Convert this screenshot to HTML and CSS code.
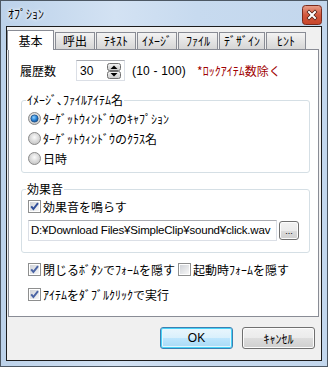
FILE: index.html
```html
<!DOCTYPE html>
<html lang="ja">
<head>
  <meta charset="UTF-8">
  <title>ｵﾌﾟｼｮﾝ</title>
  <link rel="stylesheet" href="styles.css">
</head>
<body>
<div class="window">
  <div class="titlebar">
    <span class="title">ｵﾌﾟｼｮﾝ</span>
    <span class="close">
      <svg width="20" height="20" viewBox="0 0 20 20">
        <defs>
          <linearGradient id="cg" x1="0" y1="0" x2="0" y2="1">
            <stop offset="0" stop-color="#e8a08c"/>
            <stop offset="0.5" stop-color="#d2583d"/>
            <stop offset="1" stop-color="#c8452a"/>
          </linearGradient>
        </defs>
        <rect x="0.5" y="0.5" width="19" height="19" rx="3" fill="url(#cg)" stroke="#7a2a1c"/>
        <path d="M7 7 L13 13 M13 7 L7 13" stroke="#4a1a10" stroke-width="3.4" stroke-linecap="square"/>
        <path d="M7 7 L13 13 M13 7 L7 13" stroke="#fff" stroke-width="2" stroke-linecap="square"/>
      </svg>
    </span>
  </div>

  <div class="client">
    <div class="tabctl">
      <div class="tabstrip">
        <span class="tab active">基本</span>
        <span class="tab">呼出</span>
        <span class="tab">ﾃｷｽﾄ</span>
        <span class="tab">ｲﾒｰｼﾞ</span>
        <span class="tab">ﾌｧｲﾙ</span>
        <span class="tab">ﾃﾞｻﾞｲﾝ</span>
        <span class="tab">ﾋﾝﾄ</span>
      </div>

      <div class="panel">
        <div class="row history">
          <span class="label">履歴数</span>
          <span class="spin">
            <span class="spin-val">30</span>
            <svg class="spin-btn" width="14" height="16" viewBox="0 0 14 16">
              <defs>
                <linearGradient id="sg" x1="0" y1="0" x2="0" y2="1">
                  <stop offset="0" stop-color="#f4f4f4"/>
                  <stop offset="1" stop-color="#c9c9c9"/>
                </linearGradient>
              </defs>
              <rect x="0.5" y="0.5" width="13" height="7" rx="2" fill="url(#sg)" stroke="#707070"/>
              <rect x="0.5" y="8.5" width="13" height="7" rx="2" fill="url(#sg)" stroke="#707070"/>
              <path d="M3.5 6 L7 2.5 L10.5 6 Z" fill="#000"/>
              <path d="M3.5 10 L7 13.5 L10.5 10 Z" fill="#000"/>
            </svg>
          </span>
          <span class="range">(10 - 100)</span>
          <span class="note">*ﾛｯｸｱｲﾃﾑ数除く</span>
        </div>

        <fieldset class="group">
          <legend>ｲﾒｰｼﾞ､ﾌｧｲﾙｱｲﾃﾑ名</legend>
          <div class="opt">
            <svg class="radio" width="13" height="13" viewBox="0 0 13 13">
              <defs>
                <radialGradient id="rg" cx="50%" cy="40%" r="60%">
                  <stop offset="0" stop-color="#fafafa"/>
                  <stop offset="1" stop-color="#c4c4c4"/>
                </radialGradient>
                <radialGradient id="rb" cx="40%" cy="35%" r="65%">
                  <stop offset="0" stop-color="#8ed0ff"/>
                  <stop offset="0.6" stop-color="#2a83d6"/>
                  <stop offset="1" stop-color="#15549a"/>
                </radialGradient>
              </defs>
              <circle cx="6.5" cy="6.5" r="6" fill="url(#rg)" stroke="#8a8a8a"/>
              <circle cx="6.5" cy="6.5" r="3.6" fill="url(#rb)" stroke="#1c4f86" stroke-width="0.8"/>
            </svg>
            <span>ﾀｰｹﾞｯﾄｳｨﾝﾄﾞｳのｷｬﾌﾟｼｮﾝ</span>
          </div>
          <div class="opt">
            <svg class="radio" width="13" height="13" viewBox="0 0 13 13">
              <circle cx="6.5" cy="6.5" r="6" fill="url(#rg)" stroke="#8a8a8a"/>
            </svg>
            <span>ﾀｰｹﾞｯﾄｳｨﾝﾄﾞｳのｸﾗｽ名</span>
          </div>
          <div class="opt">
            <svg class="radio" width="13" height="13" viewBox="0 0 13 13">
              <circle cx="6.5" cy="6.5" r="6" fill="url(#rg)" stroke="#8a8a8a"/>
            </svg>
            <span>日時</span>
          </div>
        </fieldset>

        <fieldset class="group sound">
          <legend>効果音</legend>
          <div class="opt">
            <svg class="check" width="13" height="13" viewBox="0 0 13 13">
              <defs>
                <linearGradient id="kg" x1="0" y1="0" x2="1" y2="1">
                  <stop offset="0" stop-color="#d0d3d8"/>
                  <stop offset="1" stop-color="#f7f7f7"/>
                </linearGradient>
              </defs>
              <rect x="0.5" y="0.5" width="12" height="12" fill="#fff" stroke="#8e8f8f"/>
              <rect x="2" y="2" width="9" height="9" fill="url(#kg)"/>
              <path d="M3.2 6.4 L5.4 9 L10 3.2" fill="none" stroke="#2f4e9a" stroke-width="2"/>
            </svg>
            <span>効果音を鳴らす</span>
          </div>
          <div class="pathrow">
            <span class="path">D:¥Download Files¥SimpleClip¥sound¥click.wav</span>
            <span class="btn small">...</span>
          </div>
        </fieldset>

        <div class="row checks">
          <div class="opt">
            <svg class="check" width="13" height="13" viewBox="0 0 13 13">
              <rect x="0.5" y="0.5" width="12" height="12" fill="#fff" stroke="#8e8f8f"/>
              <rect x="2" y="2" width="9" height="9" fill="url(#kg)"/>
              <path d="M3.2 6.4 L5.4 9 L10 3.2" fill="none" stroke="#4a64a4" stroke-width="2"/>
            </svg>
            <span>閉じるﾎﾞﾀﾝでﾌｫｰﾑを隠す</span>
          </div>
          <div class="opt">
            <svg class="check" width="13" height="13" viewBox="0 0 13 13">
              <rect x="0.5" y="0.5" width="12" height="12" fill="#fff" stroke="#8e8f8f"/>
              <rect x="2" y="2" width="9" height="9" fill="url(#kg)"/>
            </svg>
            <span>起動時ﾌｫｰﾑを隠す</span>
          </div>
        </div>
        <div class="row checks">
          <div class="opt">
            <svg class="check" width="13" height="13" viewBox="0 0 13 13">
              <rect x="0.5" y="0.5" width="12" height="12" fill="#fff" stroke="#8e8f8f"/>
              <rect x="2" y="2" width="9" height="9" fill="url(#kg)"/>
              <path d="M3.2 6.4 L5.4 9 L10 3.2" fill="none" stroke="#4a64a4" stroke-width="2"/>
            </svg>
            <span>ｱｲﾃﾑをﾀﾞﾌﾞﾙｸﾘｯｸで実行</span>
          </div>
        </div>
      </div>
    </div>

    <div class="buttons">
      <span class="btn default">OK</span>
      <span class="btn">ｷｬﾝｾﾙ</span>
    </div>
  </div>
</div>
</body>
</html>
```

FILE: styles.css
```css
* {
  margin: 0;
  padding: 0;
  box-sizing: border-box;
}

body {
  font-family: "Noto Sans CJK JP", "Noto Sans", sans-serif;
  font-size: 12px;
  color: #000;
  background: #fff;
}

.window {
  width: 328px;
  height: 367px;
  border: 1px solid #4d5864;
  padding: 0 5px 5px 5px;
  background: linear-gradient(90deg, #bcd2ea 0%, #d3e2f3 35%, #c7daef 60%, #c3d7ed 100%);
  display: flex;
  flex-direction: column;
}

.titlebar {
  height: 25px;
  display: flex;
  align-items: flex-start;
  justify-content: space-between;
}

.title {
  margin: 5px 0 0 2px;
  line-height: 16px;
  text-shadow: 0 0 5px #fff, 0 0 3px #fff;
}

.close {
  margin-top: 4px;
  display: flex;
}

.client {
  flex: 1;
  border: 1px solid #1c1c1c;
  background: #f0f0f0;
  display: flex;
  flex-direction: column;
}

.tabctl {
  margin: 3px 2px 0 0;
}

.tabstrip {
  display: flex;
  align-items: flex-end;
  gap: 1px;
  height: 19px;
}

.tab {
  height: 17px;
  min-width: 40px;
  padding: 0 4px;
  border: 1px solid #898c95;
  border-bottom: 0;
  background: linear-gradient(#f3f3f3, #e4e4e4 50%, #d6d6d6);
  text-align: center;
  line-height: 16px;
}

.tab.active {
  width: 47px;
  height: 20px;
  margin-bottom: -1px;
  background: #fff;
  position: relative;
  z-index: 1;
  line-height: 18px;
  padding-top: 1px;
}

.panel {
  margin-left: 1px;
  height: 268px;
  border: 1px solid #898c95;
  background: #fff;
  padding: 10px 8px 0 11px;
}

.row {
  display: flex;
  align-items: center;
}

.history {
  height: 21px;
}

.label {
  width: 56px;
}

.spin {
  width: 49px;
  height: 21px;
  border: 1px solid #dbdfe6;
  border-top-color: #abadb3;
  display: flex;
  align-items: center;
  padding: 0 3px 0 3px;
  font-family: "Liberation Sans", sans-serif;
}

.spin-btn {
  margin-left: auto;
  display: block;
}

.range {
  margin-left: 7px;
  font-family: "Liberation Sans", sans-serif;
  letter-spacing: 0.2px;
}

.note {
  margin-left: 11px;
  color: #a00000;
}

.group {
  margin: 12px 0 0 1px;
  border: 1px solid #d5dfe5;
  border-radius: 3px;
  padding: 1px 0 4px 6px;
}

.group legend {
  line-height: 14px;
  padding: 0 1px;
  margin-left: -2px;
}

.opt {
  height: 20px;
  display: flex;
  align-items: center;
  gap: 2px;
  white-space: nowrap;
}

.radio,
.check {
  display: block;
  flex: none;
}

.sound {
  margin-top: 9px;
  padding: 0 0 11px 6px;
}

.pathrow {
  margin-top: 4px;
  display: flex;
  align-items: center;
  gap: 2px;
}

.path {
  width: 249px;
  height: 21px;
  border: 1px solid #dbdfe6;
  border-top-color: #abadb3;
  padding: 0 2px;
  line-height: 19px;
  font-family: "Liberation Sans", sans-serif;
  font-size: 11.5px;
  letter-spacing: -0.2px;
  white-space: nowrap;
  overflow: hidden;
}

.btn {
  display: flex;
  align-items: center;
  justify-content: center;
  width: 73px;
  height: 22px;
  border: 1px solid #707070;
  border-radius: 3px;
  background: linear-gradient(#f2f2f2, #ebebeb 50%, #dddddd 51%, #cfcfcf);
  box-shadow: inset 0 0 0 1px #fcfcfc;
}

.btn.small {
  width: 20px;
  height: 19px;
  font-family: "Liberation Sans", sans-serif;
  font-size: 9px;
  align-items: flex-end;
  padding-bottom: 3px;
  line-height: 9px;
}

.btn.default {
  border-color: #3c7fb1;
  background: linear-gradient(#eaf6fd, #d9f0fc 50%, #bee6fd 51%, #a7d9f5);
  box-shadow: inset 0 0 0 1px #48d2f8, inset 0 0 0 2px #e4f6fd;
  font-family: "Liberation Sans", sans-serif;
}

.checks {
  margin: 6px 0 0 8px;
  gap: 3px;
}

.checks + .checks {
  margin-top: 5px;
}

.buttons {
  margin-top: 10px;
  padding-right: 6px;
  display: flex;
  justify-content: flex-end;
  gap: 9px;
}
```
